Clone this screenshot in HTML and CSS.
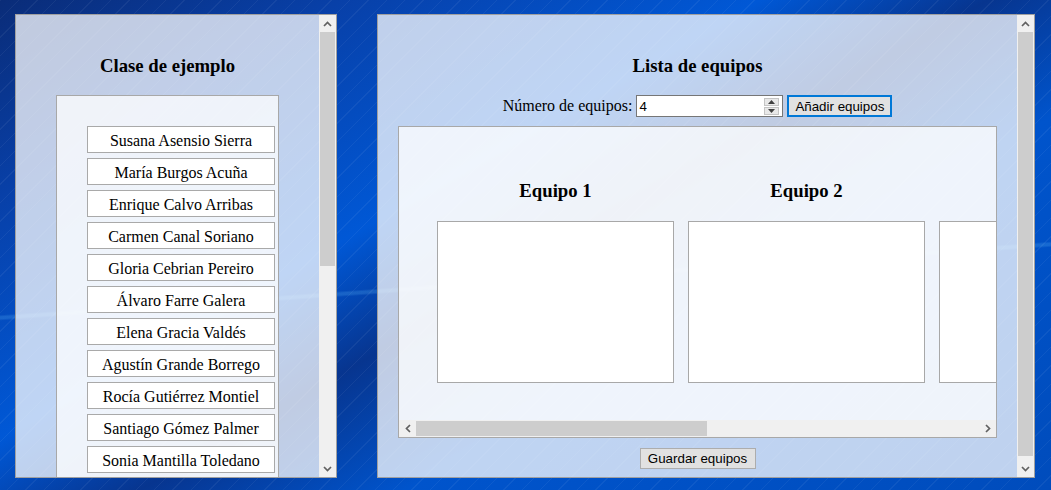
FILE: index.html
```html
<!DOCTYPE html>
<html lang="es">
<head>
<meta charset="utf-8">
<title>Equipos</title>
<link rel="stylesheet" href="styles.css">
</head>
<body>
<div class="page">
  <section class="panel panel-left">
    <div class="panel-body body-left">
      <h3 class="title">Clase de ejemplo</h3>
      <div class="roster">
        <div class="student">Susana Asensio Sierra</div>
        <div class="student">María Burgos Acuña</div>
        <div class="student">Enrique Calvo Arribas</div>
        <div class="student">Carmen Canal Soriano</div>
        <div class="student">Gloria Cebrian Pereiro</div>
        <div class="student">Álvaro Farre Galera</div>
        <div class="student">Elena Gracia Valdés</div>
        <div class="student">Agustín Grande Borrego</div>
        <div class="student">Rocía Gutiérrez Montiel</div>
        <div class="student">Santiago Gómez Palmer</div>
        <div class="student">Sonia Mantilla Toledano</div>
        <div class="student">Javier Martín Rueda</div>
        <div class="student">Lucía Navarro Prieto</div>
      </div>
    </div>
    <div class="vscroll">
      <span class="sb-btn"><svg width="9" height="6" viewBox="0 0 9 6"><path d="M1 5 L4.5 1.5 L8 5" fill="none" stroke="#606060" stroke-width="1.7"/></svg></span>
      <div class="sb-track-v"><div class="sb-thumb-v" style="height:234px"></div></div>
      <span class="sb-btn"><svg width="9" height="6" viewBox="0 0 9 6"><path d="M1 1 L4.5 4.5 L8 1" fill="none" stroke="#606060" stroke-width="1.7"/></svg></span>
    </div>
  </section>

  <section class="panel panel-right">
    <div class="panel-body body-right">
      <h3 class="title">Lista de equipos</h3>
      <div class="controls">
        <label class="label" for="num">Número de equipos:</label>
        <span class="number">
          <input id="num" class="number-input" type="text" value="4">
          <span class="spin">
            <span class="spin-btn"><svg width="7" height="4" viewBox="0 0 7 4"><path d="M0 4 L3.5 0 L7 4 Z" fill="#404040"/></svg></span>
            <span class="spin-btn"><svg width="7" height="4" viewBox="0 0 7 4"><path d="M0 0 L3.5 4 L7 0 Z" fill="#404040"/></svg></span>
          </span>
        </span>
        <button class="btn btn-focus" type="button">Añadir equipos</button>
      </div>
      <div class="teams">
        <div class="teams-view">
          <div class="teams-track">
            <div class="team"><h3 class="team-title">Equipo 1</h3><div class="team-box"></div></div>
            <div class="team"><h3 class="team-title">Equipo 2</h3><div class="team-box"></div></div>
            <div class="team"><h3 class="team-title">Equipo 3</h3><div class="team-box"></div></div>
            <div class="team"><h3 class="team-title">Equipo 4</h3><div class="team-box"></div></div>
          </div>
        </div>
        <div class="hscroll">
          <span class="sb-btn"><svg width="6" height="9" viewBox="0 0 6 9"><path d="M5 1 L1.5 4.5 L5 8" fill="none" stroke="#606060" stroke-width="1.7"/></svg></span>
          <div class="sb-track-h"><div class="sb-thumb-h" style="width:291px"></div></div>
          <span class="sb-btn"><svg width="6" height="9" viewBox="0 0 6 9"><path d="M1 1 L4.5 4.5 L1 8" fill="none" stroke="#606060" stroke-width="1.7"/></svg></span>
        </div>
      </div>
      <div class="save-row">
        <button class="btn btn-save" type="button">Guardar equipos</button>
      </div>
    </div>
    <div class="vscroll">
      <span class="sb-btn"><svg width="9" height="6" viewBox="0 0 9 6"><path d="M1 5 L4.5 1.5 L8 5" fill="none" stroke="#606060" stroke-width="1.7"/></svg></span>
      <div class="sb-track-v"><div class="sb-thumb-v" style="height:424px"></div></div>
      <span class="sb-btn"><svg width="9" height="6" viewBox="0 0 9 6"><path d="M1 1 L4.5 4.5 L8 1" fill="none" stroke="#606060" stroke-width="1.7"/></svg></span>
    </div>
  </section>
</div>
</body>
</html>
```

FILE: styles.css
```css
html, body {
  margin: 0;
  height: 100%;
  overflow: hidden;
}

body {
  font-family: "Liberation Serif", "Times New Roman", serif;
  color: #000;
  background:
    repeating-linear-gradient(135deg, rgba(255,255,255,0.05) 0 1px, transparent 1px 13px),
    linear-gradient(176deg, transparent 314px, rgba(110,200,255,0.2) 316px, rgba(110,200,255,0.2) 318px, transparent 320px),
    linear-gradient(150deg, #0a2c78 0%, #0840a8 18%, #0058d6 40%, #07358f 52%, #0054cc 66%, #004cbc 100%);
}

.page {
  display: flex;
  gap: 40px;
  padding: 14px 0 0 15px;
}

.panel {
  box-sizing: border-box;
  display: flex;
  height: 464px;
  border: 1px solid #a0a0a0;
  background: rgba(255, 255, 255, 0.75);
  overflow: hidden;
  flex: none;
}

.panel-left {
  width: 322px;
}

.panel-right {
  width: 658px;
}

.panel-body {
  flex: 1;
  min-width: 0;
  overflow: hidden;
}

.body-left {
  padding: 21px 40px 0;
}

.body-right {
  padding: 21px 20px 0;
}

/* fake classic scrollbars */
.vscroll {
  display: flex;
  flex-direction: column;
  width: 17px;
  flex: none;
  background: #f0f0f0;
}

.hscroll {
  display: flex;
  height: 17px;
  background: #f0f0f0;
}

.sb-btn {
  display: flex;
  align-items: center;
  justify-content: center;
  width: 17px;
  height: 17px;
  flex: none;
}

.sb-track-v {
  flex: 1;
}

.sb-thumb-v {
  margin: 0 1px;
  background: #cdcdcd;
}

.sb-track-h {
  flex: 1;
  display: flex;
}

.sb-thumb-h {
  margin: 1px 0;
  background: #cdcdcd;
}

.title {
  margin: 18.72px 0;
  font-size: 18.72px;
  font-weight: bold;
  text-align: center;
}

.roster {
  margin-top: 1px;
  border: 1px solid #a8a8a8;
  background: rgba(255, 255, 255, 0.75);
  padding: 30px 3px 10px 30px;
}

.student {
  border: 1px solid #a9a9a9;
  background: #fff;
  text-align: center;
  font-size: 16px;
  line-height: 19px;
  padding: 4px 0 2px;
  margin-bottom: 5px;
}

.controls {
  display: flex;
  justify-content: center;
  align-items: center;
  gap: 4px;
  height: 22px;
  margin-bottom: 9px;
}

.label {
  font-size: 16px;
}

.number {
  box-sizing: border-box;
  display: flex;
  align-items: center;
  width: 147px;
  height: 22px;
  border: 1px solid #767676;
  background: #fff;
}

.number-input {
  flex: 1;
  min-width: 0;
  border: 0;
  padding: 0 2px;
  margin: 0;
  font-family: "Liberation Sans", Arial, sans-serif;
  font-size: 13.33px;
  background: transparent;
  outline: none;
}

.spin {
  display: flex;
  flex-direction: column;
  gap: 1px;
  margin-right: 3px;
}

.spin-btn {
  box-sizing: border-box;
  display: flex;
  align-items: center;
  justify-content: center;
  width: 15px;
  height: 8px;
  background: #e8e8e8;
  border: 1px solid #c4c4c4;
}

.btn {
  box-sizing: border-box;
  font-family: "Liberation Sans", Arial, sans-serif;
  font-size: 13.33px;
  color: #000;
  background: #e1e1e1;
  border: 1px solid #adadad;
  border-radius: 0;
  margin: 0;
  padding: 0 6px;
}

.btn-focus {
  width: 105px;
  height: 22px;
  border: 2px solid #0078d7;
}

.btn-save {
  width: 116px;
  height: 21px;
}

.teams {
  box-sizing: border-box;
  height: 312px;
  border: 1px solid #a8a8a8;
  background: rgba(255, 255, 255, 0.75);
  display: flex;
  flex-direction: column;
}

.teams-view {
  flex: 1;
  overflow: hidden;
}

.teams-track {
  display: flex;
  gap: 14px;
  width: max-content;
  padding: 34px 0 0 38px;
}

.team {
  width: 237px;
  flex: none;
}

.team-title {
  margin: 18.72px 0;
  font-size: 18.72px;
  font-weight: bold;
  text-align: center;
}

.team-box {
  box-sizing: border-box;
  height: 162px;
  border: 1px solid #a8a8a8;
  background: #fff;
}

.save-row {
  display: flex;
  justify-content: center;
  margin-top: 10px;
}
```
